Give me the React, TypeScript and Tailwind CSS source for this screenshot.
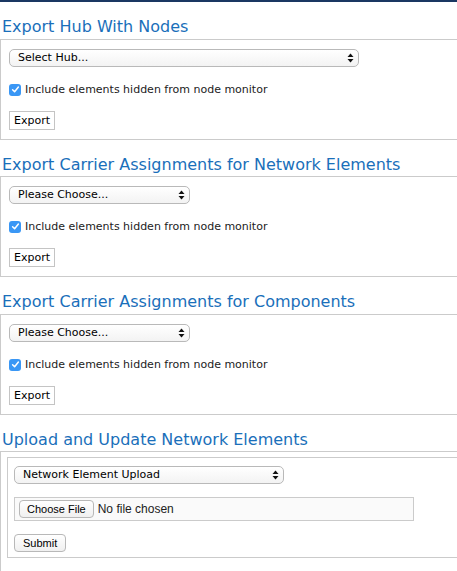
import React from 'react';

const sans = "font-['DejaVu_Sans',Verdana,sans-serif]";
const ui = "font-['Liberation_Sans',Arial,sans-serif]";

const Arrows: React.FC = () => (
    <svg className="absolute right-[5px] top-[4px] pointer-events-none" width="7" height="10" viewBox="0 0 7 10">
        <path d="M3.5 0.5 L6.5 4 L0.5 4 Z" fill="#111" />
        <path d="M3.5 9.5 L6.5 6 L0.5 6 Z" fill="#111" />
    </svg>
);

const FakeSelect: React.FC<{ label: string; width: string }> = ({ label, width }) => (
    <div className={`relative h-[18px] ${width}`}>
        <select
            className={`${sans} appearance-none block w-full h-full rounded-[5px] border border-[#b9b9b9] bg-gradient-to-b from-white to-[#f3f3f3] pl-[8px] text-[11px] leading-[16px] text-black outline-none`}
            defaultValue="a"
        >
            <option value="a">{label}</option>
        </select>
        <Arrows />
    </div>
);

const Checkbox: React.FC = () => (
    <label className="flex items-center gap-[4px] h-[13px]">
        <span className="flex items-center justify-center w-[12px] h-[12px] rounded-[3px] bg-[#3a97f5]">
            <svg width="9" height="9" viewBox="0 0 9 9">
                <path d="M1.6 4.8 L3.6 6.8 L7.4 2" fill="none" stroke="white" strokeWidth="1.5" strokeLinecap="round" strokeLinejoin="round" />
            </svg>
        </span>
        <span className={`${sans} text-[11px] leading-[13px] text-[#222]`}>Include elements hidden from node monitor</span>
    </label>
);

// tight = 1px less space under the heading, keeps the section rhythm at ~137.5px
const Heading: React.FC<{ children: React.ReactNode; tight?: boolean }> = ({ children, tight }) => (
    <h3 className={`${sans} mt-[15px] ${tight ? 'mb-[1px]' : 'mb-[2px]'} pl-[2px] text-[16px] leading-[20px] text-[#1a6fba] whitespace-nowrap`}>{children}</h3>
);

const ExportSection: React.FC<{ title: string; select: string; width: string; tight?: boolean }> = ({ title, select, width, tight }) => (
    <section>
        <Heading tight={tight}>{title}</Heading>
        <div className="border-l border-y border-[#cbcbcb] pl-[8px] pt-[9px] pb-[9px]">
            <FakeSelect label={select} width={width} />
            <div className="mt-[16px]">
                <Checkbox />
            </div>
            <button className={`${sans} mt-[15px] block h-[19px] border border-[#c4c4c4] bg-white px-[4px] text-[11px] leading-[17px] text-black`}>
                Export
            </button>
        </div>
    </section>
);

export default function App() {
    return (
        <div className="w-[457px] h-[571px] overflow-hidden bg-white">
            <div className="h-[2px] bg-[#1a3762]" />
            <ExportSection title="Export Hub With Nodes" select="Select Hub..." width="w-[350px]" />
            <ExportSection title="Export Carrier Assignments for Network Elements" select="Please Choose..." width="w-[181px]" tight />
            <ExportSection title="Export Carrier Assignments for Components" select="Please Choose..." width="w-[181px]" />

            {/* Upload */}
            <section>
                <Heading tight>Upload and Update Network Elements</Heading>
                <div className="border-l border-t border-[#cbcbcb] pl-[6px] pt-[5px] pb-[20px]">
                    <div className="border-l border-y border-[#cbcbcb] pl-[6px] pt-[8px] pb-[5px]">
                        <FakeSelect label="Network Element Upload" width="w-[270px]" />
                        <div className="mt-[13px] flex items-center w-[400px] h-[24px] border border-[#cbcbcb] bg-[#fafafa] pl-[4px]">
                            <button className={`${ui} h-[18px] rounded-[4px] border border-[#b8b8b8] bg-gradient-to-b from-white to-[#f0f0f0] px-[7px] text-[11px] leading-[16px] text-black`}>
                                Choose File
                            </button>
                            <span className={`${ui} ml-[4px] text-[12px] text-[#222]`}>No file chosen</span>
                        </div>
                        <button className={`${ui} mt-[13px] block h-[18px] rounded-[4px] border border-[#b8b8b8] bg-gradient-to-b from-white to-[#f0f0f0] px-[8px] text-[11px] leading-[16px] text-black`}>
                            Submit
                        </button>
                    </div>
                </div>
            </section>
        </div>
    );
}
